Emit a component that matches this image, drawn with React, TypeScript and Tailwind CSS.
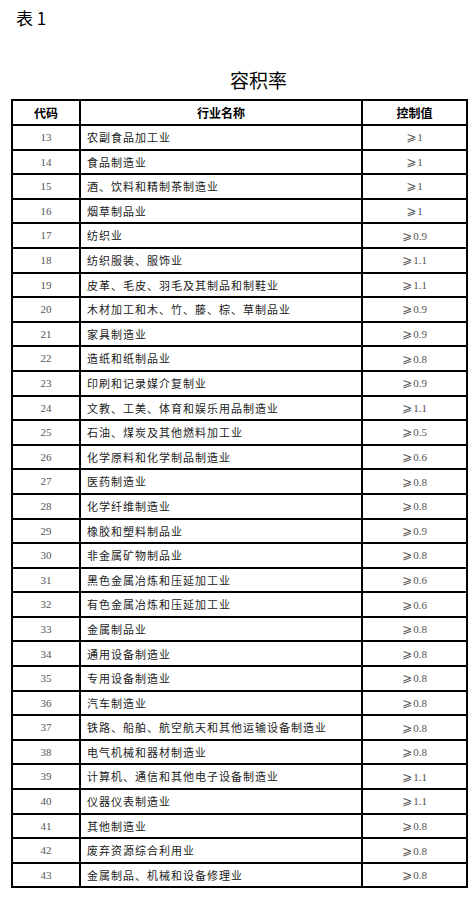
const rows: [string, string, string][] = [
  ['13', '农副食品加工业', '1'],
  ['14', '食品制造业', '1'],
  ['15', '酒、饮料和精制茶制造业', '1'],
  ['16', '烟草制品业', '1'],
  ['17', '纺织业', '0.9'],
  ['18', '纺织服装、服饰业', '1.1'],
  ['19', '皮革、毛皮、羽毛及其制品和制鞋业', '1.1'],
  ['20', '木材加工和木、竹、藤、棕、草制品业', '0.9'],
  ['21', '家具制造业', '0.9'],
  ['22', '造纸和纸制品业', '0.8'],
  ['23', '印刷和记录媒介复制业', '0.9'],
  ['24', '文教、工美、体育和娱乐用品制造业', '1.1'],
  ['25', '石油、煤炭及其他燃料加工业', '0.5'],
  ['26', '化学原料和化学制品制造业', '0.6'],
  ['27', '医药制造业', '0.8'],
  ['28', '化学纤维制造业', '0.8'],
  ['29', '橡胶和塑料制品业', '0.9'],
  ['30', '非金属矿物制品业', '0.8'],
  ['31', '黑色金属冶炼和压延加工业', '0.6'],
  ['32', '有色金属冶炼和压延加工业', '0.6'],
  ['33', '金属制品业', '0.8'],
  ['34', '通用设备制造业', '0.8'],
  ['35', '专用设备制造业', '0.8'],
  ['36', '汽车制造业', '0.8'],
  ['37', '铁路、船舶、航空航天和其他运输设备制造业', '0.8'],
  ['38', '电气机械和器材制造业', '0.8'],
  ['39', '计算机、通信和其他电子设备制造业', '1.1'],
  ['40', '仪器仪表制造业', '1.1'],
  ['41', '其他制造业', '0.8'],
  ['42', '废弃资源综合利用业', '0.8'],
  ['43', '金属制品、机械和设备修理业', '0.8'],
]

const cjk = "font-['Noto_Sans_CJK_SC',sans-serif]"

export default function App() {
  return (
    <div className="w-[473px] h-[901px] bg-white text-black">
      <div className={`pt-[8px] pl-[16px] text-[17px] leading-[20px] ${cjk}`}>表 1</div>

      <div className={`mt-[40px] pl-[230px] text-[19px] leading-[24px] ${cjk}`}>容积率</div>

      <table className="mt-[7px] ml-[11px] w-[455px] border-collapse border-2 border-black table-fixed">
        <colgroup>
          <col className="w-[68px]" />
          <col className="w-[282px]" />
          <col className="w-[105px]" />
        </colgroup>
        <thead>
          <tr className="h-[25px]">
            <th className={`border-2 border-black text-[12px] font-bold ${cjk}`}>代码</th>
            <th className={`border-2 border-black text-[12px] font-bold ${cjk}`}>行业名称</th>
            <th className={`border-2 border-black text-[12px] font-bold ${cjk}`}>控制值</th>
          </tr>
        </thead>
        <tbody>
          {rows.map(([code, name, value]) => (
            <tr key={code} className="h-[24.6px]">
              <td className="border-2 border-black text-center text-[11px] text-[#555] font-['Liberation_Serif',serif]">
                {code}
              </td>
              <td className={`border-2 border-black pl-[6px] text-[11px] tracking-[1px] text-[#222] whitespace-nowrap ${cjk}`}>
                {name}
              </td>
              <td className="border-2 border-black text-center text-[11px] text-[#555] font-['Liberation_Serif',serif]">
                <span className="text-[12px] font-['DejaVu_Sans',sans-serif] mr-[1px]">⩾</span>
                {value}
              </td>
            </tr>
          ))}
        </tbody>
      </table>
    </div>
  )
}
